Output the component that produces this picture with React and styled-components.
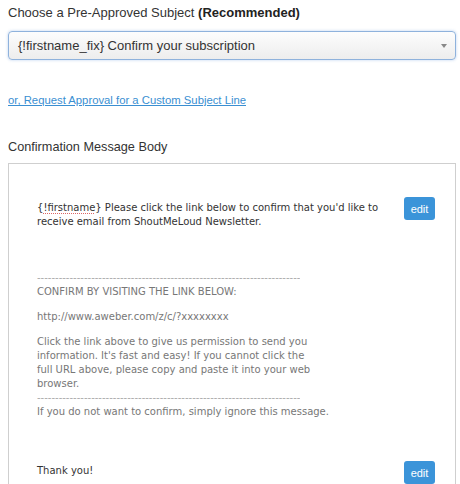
import React from "react";
import styled, { createGlobalStyle } from "styled-components";

const GlobalStyle = createGlobalStyle`
  html, body {
    margin: 0;
    padding: 0;
    background: #fff;
  }
  body {
    font-family: "Liberation Sans", Arial, sans-serif;
    color: #333;
  }
`;

const Page = styled.div`
  width: 460px;
  height: 484px;
  overflow: hidden;
  display: flex;
  flex-direction: column;
`;

const Content = styled.div`
  padding: 0 4px 0 8px;
  display: flex;
  flex-direction: column;
`;

const FieldLabel = styled.div`
  font-size: ${(p) => p.$size || 13}px;
  line-height: 16px;
  color: #333;
  margin-top: ${(p) => p.$top}px;
  b {
    font-weight: 700;
    color: #222;
  }
`;

const SelectBox = styled.div`
  margin-top: 10px;
  height: 27px;
  border: 1px solid #8fb2dc;
  border-radius: 4px;
  box-shadow: 0 0 3px rgba(102, 150, 220, 0.45);
  background: linear-gradient(#fdfdfd, #ededed);
  display: flex;
  align-items: center;
  justify-content: space-between;
  padding: 0 8px 0 9px;
  font-size: 13px;
  color: #333;
`;

const Caret = styled.span`
  width: 0;
  height: 0;
  border-left: 3px solid transparent;
  border-right: 3px solid transparent;
  border-top: 4px solid #888;
`;

const LinkLine = styled.a`
  margin-top: 33px;
  font-size: 11.3px;
  line-height: 14px;
  color: #3a8fd2;
  text-decoration: underline;
  align-self: flex-start;
`;

const MessageBox = styled.div`
  margin-top: 8px;
  height: 319px;
  border: 1px solid #cfcfcf;
  border-bottom: none;
  overflow: hidden;
  padding: 33px 20px 0 28px;
  font-family: "DejaVu Sans", Verdana, sans-serif;
  font-size: 10px;
  line-height: 14px;
  color: #333;
`;

const Row = styled.div`
  display: flex;
  justify-content: space-between;
  align-items: flex-start;
  margin-top: ${(p) => p.$top || 0}px;
`;

const RowText = styled.div`
  width: 350px;
  padding-top: ${(p) => p.$pad || 0}px;
`;

const Squiggle = styled.span`
  text-decoration: underline dotted #d66;
  text-decoration-thickness: 1px;
  text-underline-offset: 2px;
`;

const EditButton = styled.button`
  width: 31px;
  height: 23px;
  border: none;
  border-radius: 3px;
  background: #3b94d9;
  color: #fff;
  font-family: "Liberation Sans", Arial, sans-serif;
  font-size: 11px;
  padding: 0;
  cursor: pointer;
`;

const Template = styled.div`
  margin-top: ${(p) => p.$top}px;
  color: #777;
  width: 310px;
`;

const Dashes = styled.div`
  width: 263px;
  color: #aaa;
  white-space: nowrap;
  overflow: hidden;
`;

const Para = styled.p`
  margin: ${(p) => p.$top || 0}px 0 0;
  max-width: ${(p) => p.$width || 310}px;
`;

const BottomRule = styled.div`
  height: 1px;
  background: #9a9a9a;
`;

const GreenStrip = styled.div`
  flex: 1;
  background: #7f9f86;
`;

const dashes = "-".repeat(73);

export default function App() {
  return (
    <Page>
      <GlobalStyle />
      <Content>
        <FieldLabel $top={5}>
          Choose a Pre-Approved Subject <b>(Recommended)</b>
        </FieldLabel>
        <SelectBox>
          <span>{"{!firstname_fix} Confirm your subscription"}</span>
          <Caret />
        </SelectBox>
        <LinkLine href="#">or, Request Approval for a Custom Subject Line</LinkLine>
        <FieldLabel $top={32} $size={12.7}>
          Confirmation Message Body
        </FieldLabel>
        <MessageBox>
          <Row>
            <RowText $pad={4}>
              {"{"}
              <Squiggle>!firstname</Squiggle>
              {"}"} Please click the link below to confirm that you'd like to receive
              email from ShoutMeLoud Newsletter.
            </RowText>
            <EditButton>edit</EditButton>
          </Row>
          <Template $top={42}>
            <Dashes>{dashes}</Dashes>
            <div>CONFIRM BY VISITING THE LINK BELOW:</div>
            <Para $top={11}>http://www.aweber.com/z/c/?xxxxxxxx</Para>
            <Para $top={11} $width={285}>
              Click the link above to give us permission to send you information.
              It's fast and easy! If you cannot click the full URL above, please
              copy and paste it into your web browser.
            </Para>
            <Dashes>{dashes}</Dashes>
            <div>If you do not want to confirm, simply ignore this message.</div>
          </Template>
          <Row $top={42}>
            <RowText $pad={3}>Thank you!</RowText>
            <EditButton>edit</EditButton>
          </Row>
        </MessageBox>
      </Content>
      <BottomRule />
      <GreenStrip />
    </Page>
  );
}
